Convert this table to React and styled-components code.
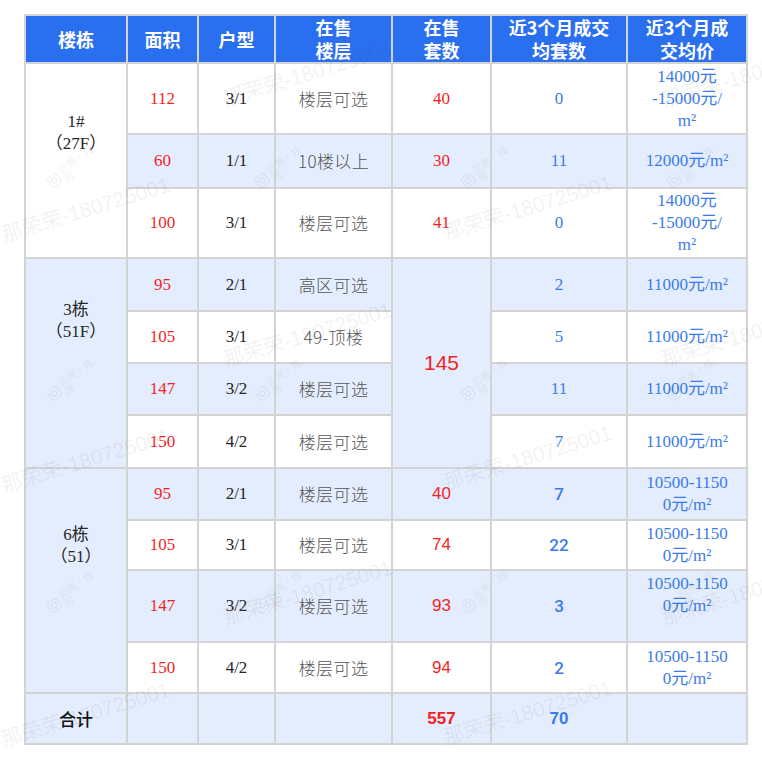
import React from "react";
import styled, { createGlobalStyle, css } from "styled-components";

const Global = createGlobalStyle`
  html, body { margin: 0; padding: 0; background: #ffffff; }
  body { font-family: "Liberation Serif", "Noto Sans CJK SC", serif; }
`;

const Page = styled.div`
  position: relative;
  width: 762px;
  height: 765px;
  overflow: hidden;
  padding: 14px 0 0 24px;
  box-sizing: border-box;
`;

const Table = styled.table`
  border-collapse: collapse;
  table-layout: fixed;
  width: 724px;
`;

const HeadRow = styled.tr`
  height: 48px;
`;

const HeadCell = styled.th`
  background: #2a6ff0;
  color: #ffffff;
  border: 2px solid #d3d3d3;
  font-family: "Noto Sans CJK SC", "Liberation Sans", sans-serif;
  font-weight: 700;
  font-size: 18px;
  line-height: 23px;
  text-align: center;
  vertical-align: middle;
  padding: 0 4px;
`;

const Row = styled.tr`
  height: ${(p) => p.$h}px;
`;

const tones = {
  red: "#f41f1f",
  blue: "#3b7be9",
  gray: "#555555",
  dark: "#262626",
  black: "#111111",
};

const faces = {
  serif: css`
    font-family: "Liberation Serif", "Noto Sans CJK SC", serif;
    font-size: 17px;
    font-weight: 400;
  `,
  cjk: css`
    font-family: "Noto Sans CJK SC", "Liberation Serif", sans-serif;
    font-size: 17px;
    font-weight: 300;
    letter-spacing: 0.4px;
  `,
  sans: css`
    font-family: "Liberation Sans", Arial, sans-serif;
    font-size: 17px;
    font-weight: 400;
  `,
  sansMid: css`
    font-family: Roboto, "Liberation Sans", sans-serif;
    font-size: 17px;
    font-weight: 500;
  `,
  big: css`
    font-family: "Liberation Sans", Arial, sans-serif;
    font-size: 21px;
    font-weight: 400;
  `,
  bold: css`
    font-family: "Liberation Sans", Arial, sans-serif;
    font-size: 17px;
    font-weight: 700;
  `,
  label: css`
    font-family: "Noto Sans CJK SC", sans-serif;
    font-size: 17px;
    font-weight: 500;
  `,
};

const Cell = styled.td`
  background: ${(p) => (p.$shade ? "#e4edfd" : "#ffffff")};
  border: 2px solid #d3d3d3;
  color: ${(p) => tones[p.$tone || "dark"]};
  ${(p) => faces[p.$face || "serif"]};
  line-height: 22px;
  text-align: center;
  vertical-align: ${(p) => (p.$top != null ? "top" : "middle")};
  padding: ${(p) => (p.$top != null ? `${p.$top}px 2px 0` : "0 2px")};
  white-space: nowrap;
`;

const Line = styled.div`
  min-height: 22px;
`;

const HeadLine = styled.div`
  min-height: 23px;
`;

const Overlay = styled.div`
  position: absolute;
  inset: 0;
  pointer-events: none;
`;

const Mark = styled.div`
  position: absolute;
  transform: translate(-50%, -50%) rotate(-17deg);
  font-family: "Liberation Sans", "Noto Sans CJK SC", sans-serif;
  font-size: 21px;
  color: rgba(60, 60, 60, 0.075);
  white-space: nowrap;
`;

const LogoMark = styled.div`
  position: absolute;
  transform: translate(-50%, -50%) rotate(-35deg);
  width: 56px;
  height: 22px;
  display: flex;
  align-items: center;
  gap: 3px;
  opacity: 0.05;
`;

const LogoText = styled.span`
  font-family: "Noto Sans CJK SC", sans-serif;
  font-size: 10px;
  color: #000;
  line-height: 1;
`;

const COLS = [102, 71, 77, 117, 99, 136, 120];

const HEAD = [
  ["楼栋"],
  ["面积"],
  ["户型"],
  ["在售", "楼层"],
  ["在售", "套数"],
  ["近3个月成交", "均套数"],
  ["近3个月成", "交均价"],
];

const P1 = ["14000元", "-15000元/", "m²"];
const P2 = ["10500-1150", "0元/m²"];
const P3 = ["10500-1150", "0元/m²", ""];

const ROWS = [
  { h: 71, shade: false, group: { lines: ["1#", "（27F）"], span: 3, shade: false, top: 47 }, area: "112", type: "3/1", floor: "楼层可选", sale: { v: "40", face: "serif" }, deal: { v: "0", face: "serif" }, price: P1 },
  { h: 54, shade: true, area: "60", type: "1/1", floor: "10楼以上", sale: { v: "30", face: "serif" }, deal: { v: "11", face: "serif" }, price: ["12000元/m²"] },
  { h: 70, shade: false, area: "100", type: "3/1", floor: "楼层可选", sale: { v: "41", face: "serif" }, deal: { v: "0", face: "serif" }, price: P1 },
  { h: 53, shade: true, group: { lines: ["3栋", "（51F）"], span: 4, shade: true, top: 40 }, area: "95", type: "2/1", floor: "高区可选", sale: { v: "145", face: "big", span: 4, shade: true }, deal: { v: "2", face: "serif" }, price: ["11000元/m²"] },
  { h: 52, shade: false, area: "105", type: "3/1", floor: "49-顶楼", deal: { v: "5", face: "serif" }, price: ["11000元/m²"] },
  { h: 52, shade: true, area: "147", type: "3/2", floor: "楼层可选", deal: { v: "11", face: "serif" }, price: ["11000元/m²"] },
  { h: 53, shade: false, area: "150", type: "4/2", floor: "楼层可选", deal: { v: "7", face: "serif" }, price: ["11000元/m²"] },
  { h: 52, shade: true, group: { lines: ["6栋", "（51）"], span: 4, shade: true, top: 55 }, area: "95", type: "2/1", floor: "楼层可选", sale: { v: "40", face: "sans" }, deal: { v: "7", face: "sansMid" }, price: P2 },
  { h: 50, shade: false, area: "105", type: "3/1", floor: "楼层可选", sale: { v: "74", face: "sans" }, deal: { v: "22", face: "sansMid" }, price: P2 },
  { h: 72, shade: true, area: "147", type: "3/2", floor: "楼层可选", sale: { v: "93", face: "sans" }, deal: { v: "3", face: "sansMid" }, price: P3 },
  { h: 51, shade: false, area: "150", type: "4/2", floor: "楼层可选", sale: { v: "94", face: "sans" }, deal: { v: "2", face: "sansMid" }, price: P2 },
];

const MARKS = [
  [307, 72], [307, 333], [307, 591], [745, 74], [745, 333], [745, 591],
  [85, 208], [85, 459], [85, 713], [527, 206], [527, 456], [527, 711],
];

const LOGOS = [];
[72, 280, 486, 692].forEach((x) => [168, 381, 593].forEach((y) => LOGOS.push([x, y])));

function Logo() {
  return (
    <svg width="16" height="16" viewBox="0 0 16 16">
      <rect x="1" y="1" width="14" height="14" rx="4" fill="none" stroke="#000" strokeWidth="1.4" />
      <circle cx="8" cy="8" r="3.2" fill="none" stroke="#000" strokeWidth="1.4" />
    </svg>
  );
}

function Lines({ lines }) {
  return lines.map((l, i) => <Line key={i}>{l || "\u00a0"}</Line>);
}

export default function App() {
  return (
    <>
      <Global />
      <Page>
        <Table>
          <colgroup>
            {COLS.map((w, i) => (
              <col key={i} style={{ width: w }} />
            ))}
          </colgroup>
          <thead>
            <HeadRow>
              {HEAD.map((h, i) => (
                <HeadCell key={i}>
                  {h.map((l, j) => (
                    <HeadLine key={j}>{l}</HeadLine>
                  ))}
                </HeadCell>
              ))}
            </HeadRow>
          </thead>
          <tbody>
            {ROWS.map((r, i) => (
              <Row key={i} $h={r.h}>
                {r.group && (
                  <Cell rowSpan={r.group.span} $shade={r.group.shade} $top={r.group.top} $tone="dark">
                    <Lines lines={r.group.lines} />
                  </Cell>
                )}
                <Cell $shade={r.shade} $tone="red">{r.area}</Cell>
                <Cell $shade={r.shade} $tone="dark">{r.type}</Cell>
                <Cell $shade={r.shade} $tone="gray" $face="cjk">{r.floor}</Cell>
                {r.sale && (
                  <Cell
                    rowSpan={r.sale.span || 1}
                    $shade={r.sale.shade != null ? r.sale.shade : r.shade}
                    $tone="red"
                    $face={r.sale.face}
                  >
                    {r.sale.v}
                  </Cell>
                )}
                <Cell $shade={r.shade} $tone="blue" $face={r.deal.face}>{r.deal.v}</Cell>
                <Cell $shade={r.shade} $tone="blue">
                  <Lines lines={r.price} />
                </Cell>
              </Row>
            ))}
            <Row $h={51}>
              <Cell $shade $tone="black" $face="label">合计</Cell>
              <Cell $shade />
              <Cell $shade />
              <Cell $shade />
              <Cell $shade $tone="red" $face="bold">557</Cell>
              <Cell $shade $tone="blue" $face="bold">70</Cell>
              <Cell $shade />
            </Row>
          </tbody>
        </Table>
        <Overlay>
          {LOGOS.map(([x, y], i) => (
            <LogoMark key={"l" + i} style={{ left: x, top: y }}>
              <Logo />
              <LogoText>贝壳·找房</LogoText>
            </LogoMark>
          ))}
          {MARKS.map(([x, y], i) => (
            <Mark key={"m" + i} style={{ left: x, top: y }}>
              那荣荣-180725001
            </Mark>
          ))}
        </Overlay>
      </Page>
    </>
  );
}
